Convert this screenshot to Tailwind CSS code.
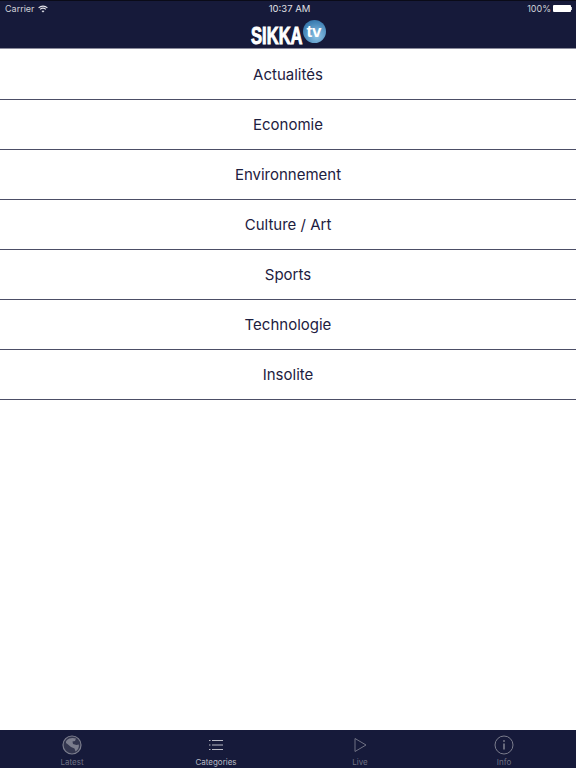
<!DOCTYPE html>
<html lang="en">

<head>
    <meta charset="UTF-8">
    <title>Sikka TV</title>
    <script src="https://cdn.jsdelivr.net/npm/@tailwindcss/browser@4"></script>
</head>

<body class="font-['Inter','Liberation_Sans',sans-serif] bg-white">
    <div class="flex flex-col w-[576px] h-[768px] overflow-hidden">
        <!-- status bar + nav -->
        <header class="h-[49px] shrink-0 bg-[#161a3a] border-t border-t-[#0a0b18] border-b border-b-[#8b8c9c] flex flex-col">
            <div class="h-[15px] flex items-center justify-between pl-[5px] pr-[4px] text-[9px] leading-none text-[#d0d1d8]">
                <div class="flex-1 flex items-center gap-[3px]">
                    <span>Carrier</span>
                    <svg width="10" height="8" viewBox="0 0 10 8" fill="none" stroke="#e4e4ea" stroke-width="1.1">
                        <path d="M0.6 2.8C3 0.6 7 0.6 9.4 2.8" />
                        <path d="M2.1 4.4C3.7 3 6.3 3 7.9 4.4" />
                        <path d="M5 7.6L3.5 5.9C4.4 5.2 5.6 5.2 6.5 5.9Z" fill="#e4e4ea" stroke="none" />
                    </svg>
                </div>
                <span class="text-[#e0e0e6] text-[9.5px] ml-[2px]">10:37 AM</span>
                <div class="flex-1 flex items-center justify-end">
                    <span class="mr-[2px]">100%</span>
                    <div class="w-[18px] h-[7px] bg-white rounded-[1px]"></div>
                    <div class="w-[1px] h-[3px] bg-[#d0d1d8]"></div>
                </div>
            </div>
            <div class="flex-1 flex items-start justify-center">
                <div class="flex items-start">
                    <div class="w-[52px] h-[22px] mt-[9px] flex justify-end">
                        <span class="font-['Liberation_Sans'] font-bold text-[23px] leading-[22px] text-white [-webkit-text-stroke:1px_white] scale-x-[0.72] origin-right">SIKKA</span>
                    </div>
                    <div class="w-[23px] h-[23px] mt-[4px] rounded-full bg-[radial-gradient(circle_at_60%_70%,#8fc4e6,#3d7fb3_70%,#2a5f92)] flex items-center justify-center">
                        <span class="font-['Liberation_Sans'] font-bold text-[17px] leading-none text-white">tv</span>
                    </div>
                </div>
            </div>
        </header>

        <ul class="flex-1 flex flex-col text-[#1d2040] text-[15px] pt-[1px]">
            <li class="h-[50px] pt-[1px] border-b border-[#4c4e66] flex items-center justify-center">Actualités</li>
            <li class="h-[50px] pt-[1px] border-b border-[#4c4e66] flex items-center justify-center">Economie</li>
            <li class="h-[50px] pt-[1px] border-b border-[#4c4e66] flex items-center justify-center">Environnement</li>
            <li class="h-[50px] pt-[1px] border-b border-[#4c4e66] flex items-center justify-center">Culture / Art</li>
            <li class="h-[50px] pt-[1px] border-b border-[#4c4e66] flex items-center justify-center">Sports</li>
            <li class="h-[50px] pt-[1px] border-b border-[#4c4e66] flex items-center justify-center">Technologie</li>
            <li class="h-[50px] pt-[1px] border-b border-[#4c4e66] flex items-center justify-center">Insolite</li>
        </ul>

        <!-- tab bar -->
        <nav class="h-[38px] shrink-0 bg-[#161a3a] grid grid-cols-4 text-[8px] leading-none text-[#6f7183]">
            <div class="flex flex-col items-center pt-[5px] gap-[3px]">
                <svg width="20" height="20" viewBox="0 0 20 20">
                    <circle cx="10" cy="10" r="9" fill="#33364f" stroke="#7b7d8d" stroke-width="1.2" />
                    <path d="M5 5C7 2.8 11 2.4 14 3.6L13 6L10.5 6.5L11 9L14.5 10L16.8 9.5C17.4 12 16 15 13.5 16.5L12.5 13.5L9 12L6 9.5L4 8C3.8 6.8 4.2 5.8 5 5Z" fill="#7b7d8d" />
                </svg>
                <span>Latest</span>
            </div>
            <div class="flex flex-col items-center pt-[5px] gap-[3px] text-[#b9bac4]">
                <svg width="20" height="20" viewBox="0 0 20 20" stroke="#b9bac4" stroke-width="1">
                    <path d="M6 5.5H17M6 10H17M6 14.5H17" />
                    <path d="M3 5.5H4.5M3 10H4.5M3 14.5H4.5" />
                </svg>
                <span>Categories</span>
            </div>
            <div class="flex flex-col items-center pt-[5px] gap-[3px]">
                <svg width="20" height="20" viewBox="0 0 20 20" fill="none" stroke="#6f7183" stroke-width="1">
                    <path d="M5 3.5L16 10L5 16.5Z" />
                </svg>
                <span>Live</span>
            </div>
            <div class="flex flex-col items-center pt-[5px] gap-[3px]">
                <svg width="20" height="20" viewBox="0 0 20 20" fill="none" stroke="#7b7d8d" stroke-width="1">
                    <circle cx="10" cy="10" r="9" />
                    <path d="M10 8.5V14.5" stroke-width="1.6" />
                    <path d="M10 5.2V6.8" stroke-width="1.8" />
                </svg>
                <span>Info</span>
            </div>
        </nav>
    </div>
</body>

</html>
